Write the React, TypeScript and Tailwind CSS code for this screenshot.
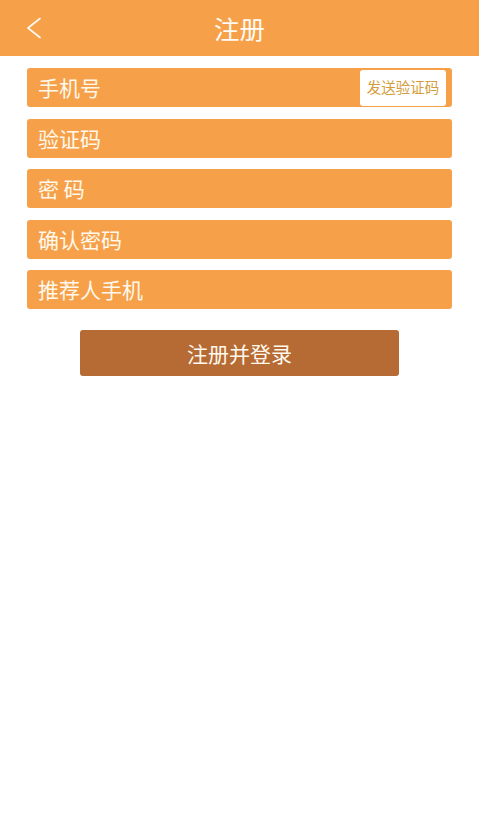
const fields = ["手机号", "验证码", "密 码", "确认密码", "推荐人手机"];

export default function App() {
  return (
    <div
      className="w-full min-h-[818px] bg-white"
      style={{ fontFamily: '"Noto Sans CJK SC", "Noto Sans", sans-serif' }}
    >
      {/* header */}
      <div className="relative flex h-[56px] items-center justify-center bg-[#f6a14a]">
        <button className="absolute left-[26px] top-[17px] flex h-[22px] w-[16px] items-center">
          <svg width="16" height="22" viewBox="0 0 16 22" fill="none">
            <path
              d="M14 1.5 L2 11 L14 20.5"
              stroke="#fffaf2"
              strokeWidth="1.6"
              strokeLinecap="round"
              strokeLinejoin="round"
            />
          </svg>
        </button>
        <h1 className="text-[25.5px] leading-none text-[#fffaf2]">注册</h1>
      </div>

      {/* form */}
      <div className="flex flex-col gap-[11.5px] px-[27px] pt-[12px]">
        {fields.map((label, i) => (
          <div
            key={label}
            className="flex h-[39px] items-center justify-between rounded-[3px] bg-[#f6a14a] pl-[11px] pr-[6px]"
          >
            <span className="text-[21px] leading-none text-[#fff8ec]">{label}</span>
            {i === 0 && (
              <button className="flex h-[36px] w-[86px] items-center justify-center rounded-[3px] bg-white text-[14.5px] leading-none text-[#d49d3c]">
                发送验证码
              </button>
            )}
          </div>
        ))}
      </div>

      <div className="flex justify-center pt-[21px]">
        <button className="h-[46px] w-[319px] rounded-[3px] bg-[#b66a34] text-[21px] leading-none text-[#fff8ec]">
          注册并登录
        </button>
      </div>
    </div>
  );
}
